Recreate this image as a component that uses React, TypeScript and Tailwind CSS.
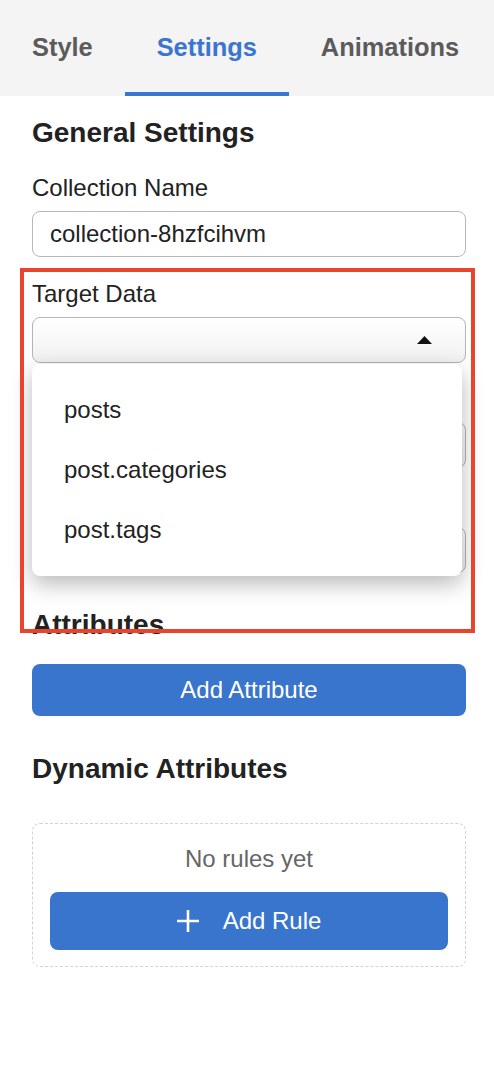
import { useState } from "react"

const tabs = ["Style", "Settings", "Animations"]
const options = ["posts", "post.categories", "post.tags"]

function Field({ label, children, className }: { label?: string; children: React.ReactNode; className?: string }) {
  return (
    <div className={"relative " + (className ?? "")}>
      <div className="h-7 text-[24px] leading-7 text-[#222] mb-[9px]">{label}</div>
      {children}
    </div>
  )
}

export default function App() {
  const [active, setActive] = useState("Settings")
  const [open] = useState(true)

  return (
    <div className="relative w-[494px] min-h-[1074px] bg-white font-['Liberation_Sans',Arial,sans-serif]">
      {/* tabs */}
      <div className="flex h-[96px] bg-[#f4f4f4]">
        {tabs.map((t) => (
          <button
            key={t}
            onClick={() => setActive(t)}
            className={
              "px-8 h-full flex items-center text-[25.4px] leading-none font-bold " +
              (active === t ? "text-[#3a76cf] shadow-[inset_0_-4px_0_#3a76cf]" : "text-[#5b5b5b]")
            }
          >
            {t}
          </button>
        ))}
      </div>

      <div className="pl-8 pr-[28px] pt-[21px]">
        <h2 className="text-[28px] leading-8 font-bold text-[#222]">General Settings</h2>

        <Field label="Collection Name" className="mt-[25px]">
          <div className="h-[46px] rounded-lg border border-[#b8b8b8] px-[17px] flex items-center text-[24px] text-[#222]">
            collection-8hzfcihvm
          </div>
        </Field>

        <Field label="Target Data" className="mt-[23px] z-10">
          <div className="h-[46px] rounded-lg border border-[#b5b5b5] bg-linear-to-b from-white to-[#f1f1f1] flex items-center justify-end pr-[33px]">
            <svg width="15" height="8" viewBox="0 0 15 8">
              <polygon points="7.5,0 15,8 0,8" fill="#111" />
            </svg>
          </div>
          {open && (
            <div className="absolute left-0 top-full mt-px w-[430px] rounded-lg bg-white py-4 shadow-[0_8px_22px_rgba(0,0,0,0.28)]">
              {options.map((o) => (
                <div key={o} className="h-[60px] flex items-center pl-8 text-[24px] text-[#222]">
                  {o}
                </div>
              ))}
            </div>
          )}
        </Field>

        {/* fields hidden under the open menu */}
        <Field className="mt-[22px]">
          <div className="h-[46px] rounded-lg border border-[#b5b5b5] bg-linear-to-b from-white to-[#f1f1f1]" />
        </Field>

        <Field className="mt-[22px]">
          <div className="h-[46px] rounded-lg border border-[#b5b5b5] bg-linear-to-b from-white to-[#f1f1f1]" />
        </Field>

        <h2 className="mt-[36px] text-[28px] leading-8 font-bold text-[#222]">Attributes</h2>
        <button className="mt-[23px] w-full h-[52px] rounded-lg bg-[#3975cc] text-white text-[24px]">
          Add Attribute
        </button>

        <h2 className="mt-[37px] text-[28px] leading-8 font-bold text-[#222]">Dynamic Attributes</h2>
        <div className="mt-[38px] rounded-lg border border-dashed border-[#d2d2d2] pt-[21px] px-[17px] pb-[16px]">
          <p className="text-center text-[24px] leading-7 text-[#666] mb-[19px]">No rules yet</p>
          <button className="w-full h-[58px] rounded-lg bg-[#3975cc] text-white text-[24px] flex items-center justify-center gap-6">
            <svg width="22" height="22" viewBox="0 0 22 22">
              <path d="M11 0v22M0 11h22" stroke="white" strokeWidth="2.6" />
            </svg>
            Add Rule
          </button>
        </div>
      </div>

      {/* annotation frame */}
      <div className="absolute left-[20px] top-[268px] w-[455px] h-[365px] border-4 border-[#e9452c] pointer-events-none z-20" />
    </div>
  )
}
